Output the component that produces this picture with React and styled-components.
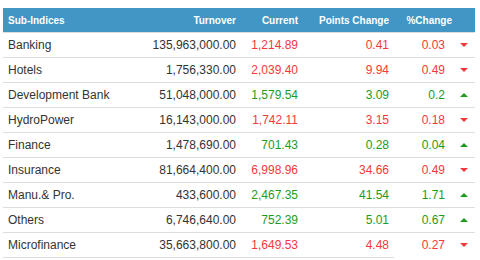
import React from "react";
import styled, { createGlobalStyle } from "styled-components";

const Global = createGlobalStyle`
  html, body { margin: 0; padding: 0; background: #fff; }
  body { font-family: "Liberation Sans", Arial, sans-serif; }
`;

const COLS = "128px 110px 62px 91px 56px 25px";

const Table = styled.div`
  width: 472px;
  margin: 8px 0 0 3px;
`;

const HeaderRow = styled.div`
  display: grid;
  grid-template-columns: ${COLS};
  height: 24px;
  background: #4196c5;
  border-bottom: 1px solid #dcdcdc;
  color: #fff;
  font-weight: bold;
  font-size: 10px;
`;

const HeadCell = styled.div`
  display: flex;
  align-items: center;
  justify-content: ${(p) => (p.$left ? "flex-start" : "flex-end")};
  padding: 0 ${(p) => p.$pr ?? 5}px 0 5px;
  grid-column: ${(p) => p.$span || "auto"};
  white-space: nowrap;
`;

const Row = styled.div`
  display: grid;
  grid-template-columns: ${COLS};
  height: 25px;
  font-size: 12px;
`;

const Cell = styled.div`
  display: flex;
  align-items: center;
  justify-content: ${(p) => (p.$left ? "flex-start" : p.$center ? "center" : "flex-end")};
  padding: 0 5px;
  border-bottom: 1px solid ${(p) => (p.$noLine ? "transparent" : "#dddddd")};
  color: ${(p) => (p.$tone === "up" ? "#1e9b1e" : p.$tone === "down" ? "#f3393b" : "#333")};
  white-space: nowrap;
`;

const Arrow = styled.span`
  width: 0;
  height: 0;
  border-left: 4px solid transparent;
  border-right: 4px solid transparent;
  ${(p) =>
    p.$up
      ? "border-bottom: 4px solid #1e9b1e;"
      : "border-top: 4px solid #f3393b;"}
  margin-left: 2px;
`;

const data = [
  ["Banking", "135,963,000.00", "1,214.89", "0.41", "0.03", false],
  ["Hotels", "1,756,330.00", "2,039.40", "9.94", "0.49", false],
  ["Development Bank", "51,048,000.00", "1,579.54", "3.09", "0.2", true],
  ["HydroPower", "16,143,000.00", "1,742.11", "3.15", "0.18", false],
  ["Finance", "1,478,690.00", "701.43", "0.28", "0.04", true],
  ["Insurance", "81,664,400.00", "6,998.96", "34.66", "0.49", false],
  ["Manu.& Pro.", "433,600.00", "2,467.35", "41.54", "1.71", true],
  ["Others", "6,746,640.00", "752.39", "5.01", "0.67", true],
  ["Microfinance", "35,663,800.00", "1,649.53", "4.48", "0.27", false],
];

export default function App() {
  return (
    <>
      <Global />
      <Table>
        <HeaderRow>
          <HeadCell $left>Sub-Indices</HeadCell>
          <HeadCell>Turnover</HeadCell>
          <HeadCell>Current</HeadCell>
          <HeadCell>Points Change</HeadCell>
          <HeadCell $span="5 / 7" $pr={23}>%Change</HeadCell>
        </HeaderRow>
        {data.map(([name, turnover, cur, pts, pct, up], i) => {
          const tone = up ? "up" : "down";
          const last = i === data.length - 1;
          return (
            <Row key={name}>
              <Cell $left>{name}</Cell>
              <Cell>{turnover}</Cell>
              <Cell $tone={tone}>{cur}</Cell>
              <Cell $tone={tone}>{pts}</Cell>
              <Cell $tone={tone} $noLine={last}>{pct}</Cell>
              <Cell $center $noLine={last}>
                <Arrow $up={up} />
              </Cell>
            </Row>
          );
        })}
      </Table>
    </>
  );
}
